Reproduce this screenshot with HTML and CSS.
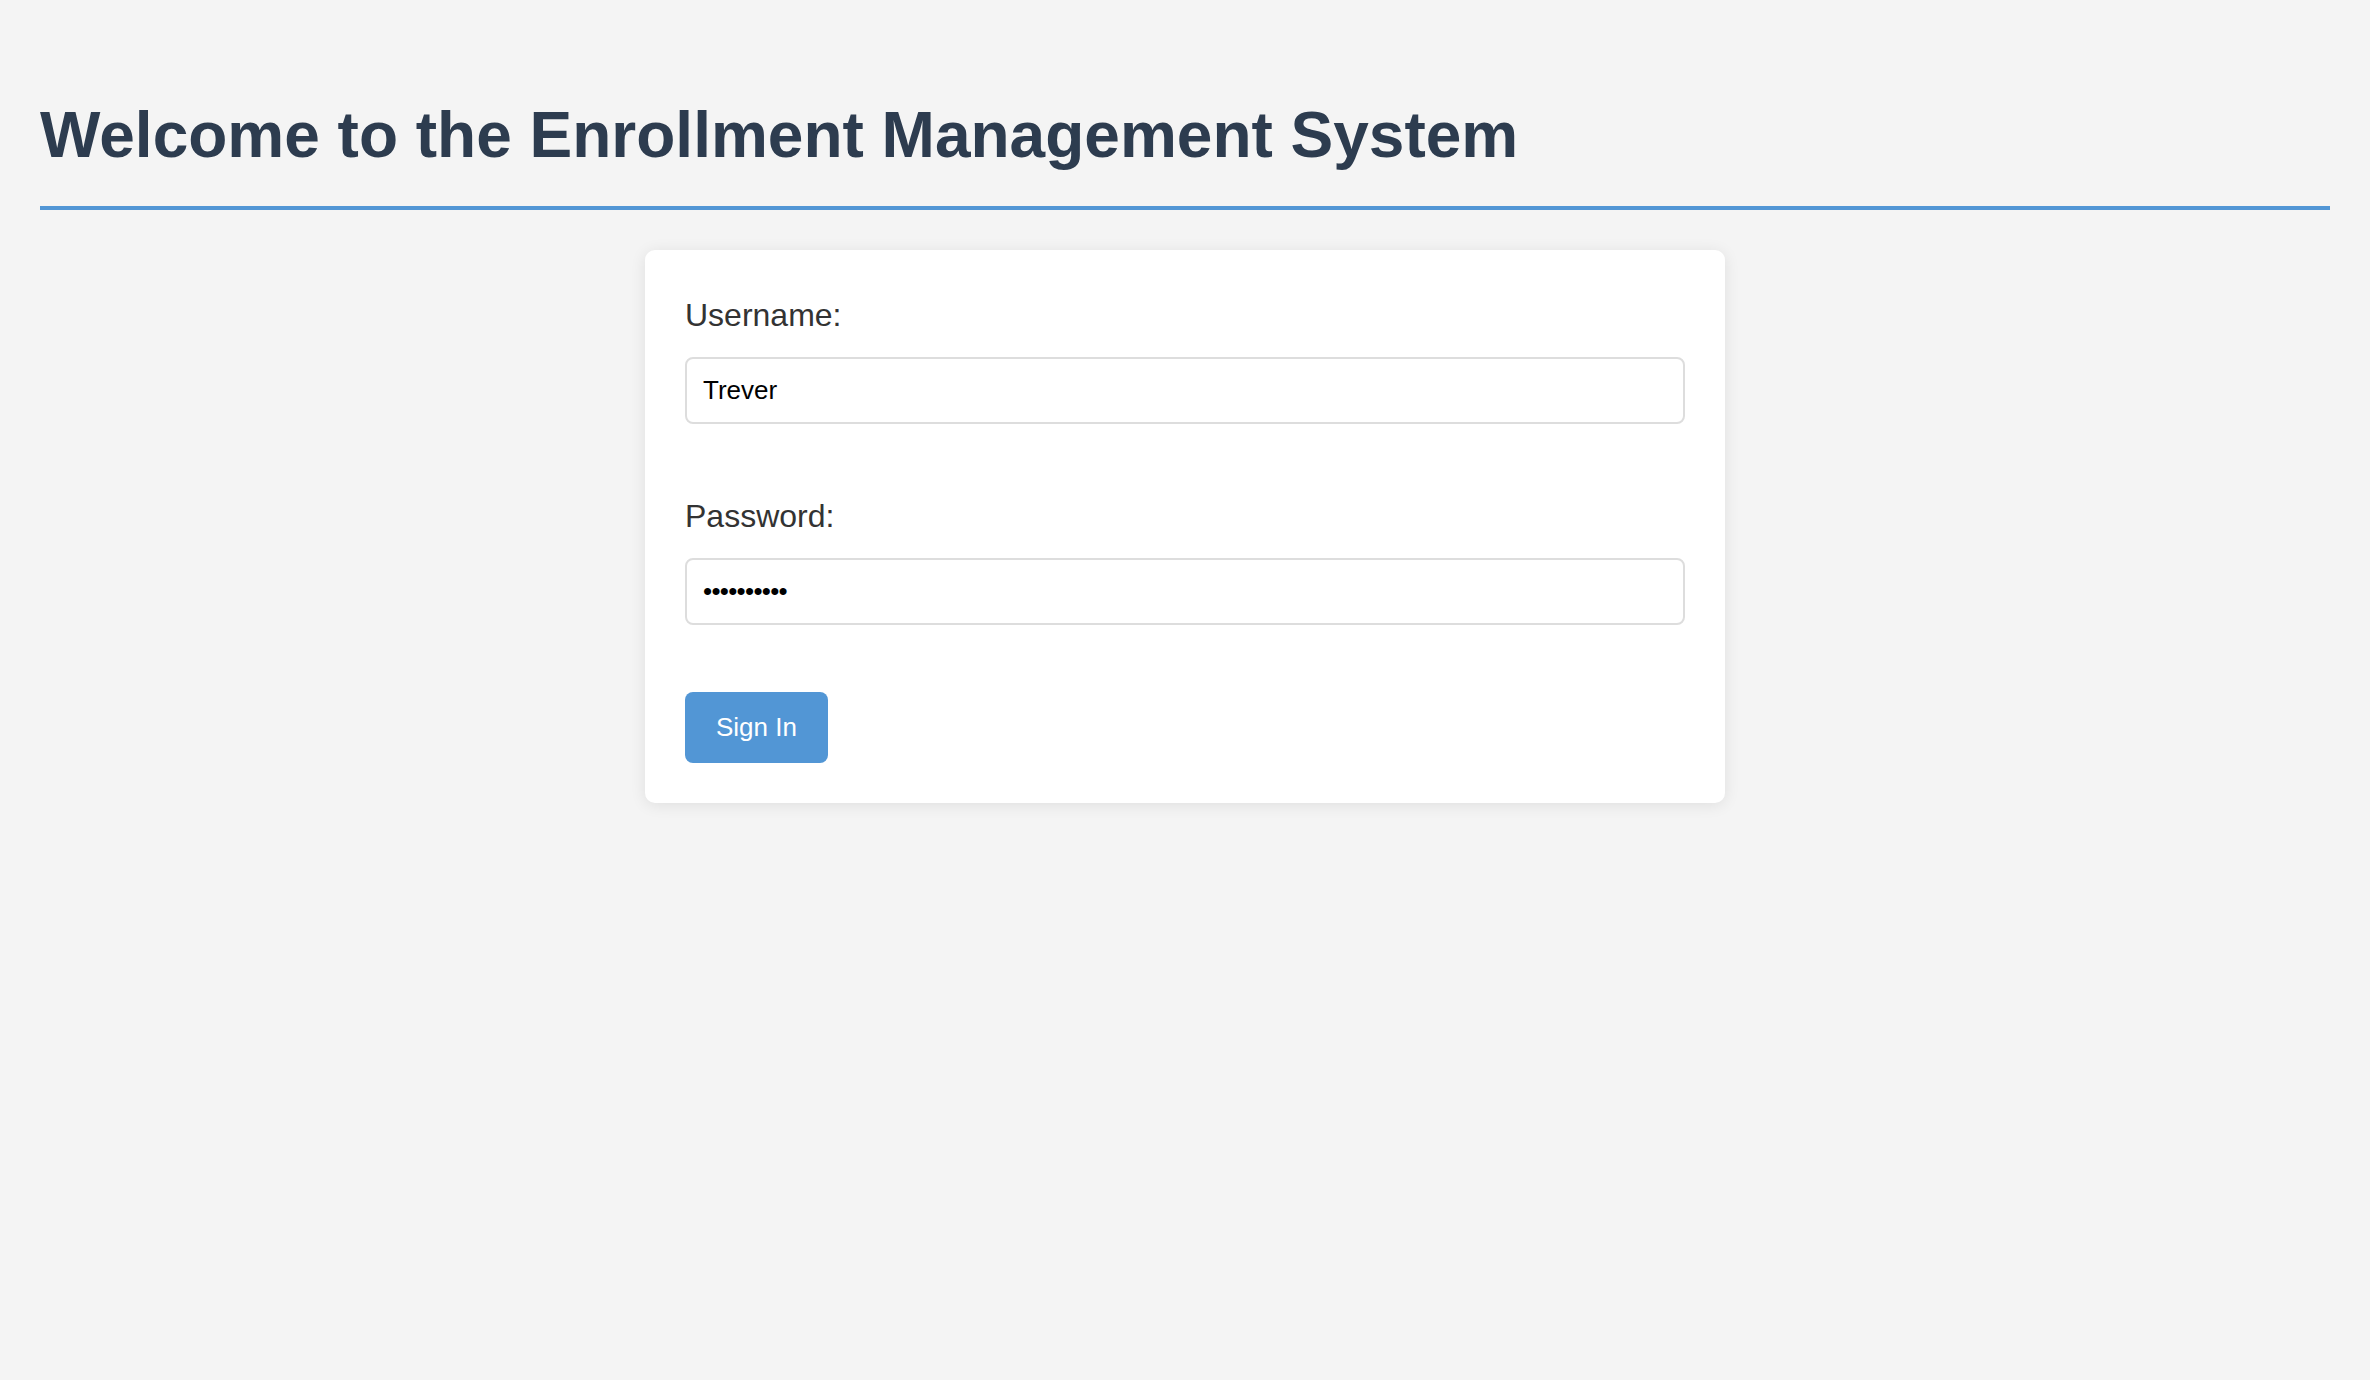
FILE: index.html
```html
<!DOCTYPE html>
<html lang="en">
<head>
<meta charset="utf-8">
<title>Enrollment Management System</title>
<link rel="stylesheet" href="styles.css">
</head>
<body>
  <h1 class="page-title">Welcome to the Enrollment Management System</h1>
  <form class="login-card" onsubmit="return false;">
    <div class="form-group">
      <label class="field-label" for="username">Username:</label>
      <input class="field-input" type="text" id="username" value="Trever">
    </div>
    <div class="form-group">
      <label class="field-label" for="password">Password:</label>
      <input class="field-input field-password" type="password" id="password" value="abcdefghij">
    </div>
    <button class="btn-primary" type="submit">Sign In</button>
  </form>
</body>
</html>
```

FILE: styles.css
```css
html, body {
  margin: 0;
  background: #f4f4f4;
}

body {
  padding: 0 40px 40px;
  font-family: "Liberation Sans", Arial, Helvetica, sans-serif;
  line-height: 1.6;
  color: #333;
}

.page-title {
  margin: 83.5px 0 40px;
  padding-bottom: 20px;
  border-bottom: 4px solid #5296d5;
  font-size: 64px;
  font-weight: bold;
  color: #2d3c4f;
}

.login-card {
  box-sizing: border-box;
  max-width: 1080px;
  margin: 0 auto;
  padding: 40px;
  background: #ffffff;
  border-radius: 10px;
  box-shadow: 0 2px 16px rgba(0, 0, 0, 0.09);
}

.form-group {
  margin-bottom: 67px;
}

.field-label {
  display: block;
  margin-bottom: 16px;
  font-size: 32px;
  color: #333333;
}

.field-input {
  box-sizing: border-box;
  display: block;
  width: 100%;
  padding: 16px;
  border: 2px solid #dddddd;
  border-radius: 8px;
  font-family: "Liberation Sans", Arial, Helvetica, sans-serif;
  font-size: 26px;
  color: #000000;
  background: #ffffff;
  outline: none;
}

.field-password {
  letter-spacing: -0.7px;
}

.btn-primary {
  display: inline-block;
  padding: 20px 31px;
  border: none;
  border-radius: 8px;
  background: #5296d5;
  color: #ffffff;
  font-family: "Liberation Sans", Arial, Helvetica, sans-serif;
  font-size: 26px;
  line-height: normal;
  cursor: pointer;
}
```
